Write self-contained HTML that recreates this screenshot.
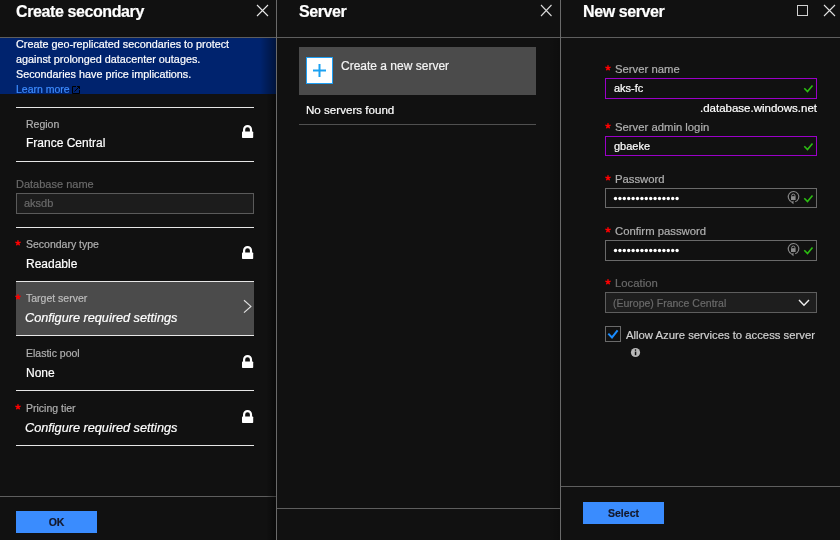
<!DOCTYPE html>
<html><head><meta charset="utf-8">
<style>
*{margin:0;padding:0;box-sizing:border-box}
html,body{width:840px;height:540px;overflow:hidden;background:#111;font-family:"Liberation Sans",sans-serif;color:#fff}
.a{position:absolute;white-space:nowrap}
.tx{line-height:1;will-change:transform;-webkit-text-stroke:0.2px currentColor}
.hl{position:absolute;height:1px}
.vl{position:absolute;width:1px}
.t{font-size:16px;font-weight:bold;letter-spacing:-0.4px}
.lbl{font-size:10.5px;color:#b0b0b0}
.val{font-size:12px;color:#fff}
.it{font-style:italic;font-size:12.7px}
.ast{position:absolute;color:#f00;font-size:15px;line-height:1;font-family:"Liberation Sans",sans-serif}
.ipt{font-size:11px;color:#fff}
.btn{position:absolute;width:81px;height:22px;background:#3a8cfe}
.lock{position:absolute;left:242px}
</style></head><body>
<!-- ===== panel 1 ===== -->
<div class="a tx t" style="left:16px;top:4px">Create secondary</div>
<svg class="a" style="left:256px;top:4px" width="13" height="13" viewBox="0 0 13 13"><path d="M1 1L12 12M12 1L1 12" stroke="#e8e8e8" stroke-width="1.1"/></svg>
<div class="hl" style="left:0;top:37px;width:276px;background:#5e5e5e"></div>
<div class="a" style="left:0;top:38px;width:276px;height:56px;background:#00236e"></div>
<div class="a tx" style="left:16px;top:39px;font-size:10.8px;color:#fff">Create geo-replicated secondaries to protect</div>
<div class="a tx" style="left:16px;top:54px;font-size:10.8px;color:#fff">against prolonged datacenter outages.</div>
<div class="a tx" style="left:16px;top:69px;font-size:10.8px;color:#fff">Secondaries have price implications.</div>
<div class="a tx" style="left:16px;top:84px;font-size:10.5px;color:#3d8cff">Learn more</div>
<svg class="a" style="left:72px;top:86px" width="8" height="8" viewBox="0 0 8 8"><path d="M0.5 0.5H4M0.5 0.5V7.5H7.5V4M2.5 5.5L7.5 0.5M5 0.5H7.5V3" stroke="#000" stroke-width="1" fill="none"/></svg>

<div class="hl" style="left:16px;top:107px;width:238px;background:#e6e6e6"></div>
<div class="a tx lbl" style="left:25.6px;top:119px">Region</div>
<div class="a tx val" style="left:25.6px;top:137px">France Central</div>
<svg class="lock" style="top:125px" width="12" height="14" viewBox="0 0 12 14"><path d="M2.1 7V4.55a3.45 3.45 0 0 1 6.9 0V7" stroke="#fff" stroke-width="2.2" fill="none"/><rect x="0" y="6.6" width="11.2" height="6.4" rx="0.7" fill="#fff"/></svg>

<div class="hl" style="left:16px;top:161px;width:238px;background:#e6e6e6"></div>
<div class="a tx lbl" style="font-size:11px;left:16px;top:179px;color:#6a6a6a">Database name</div>
<div class="a" style="left:16px;top:193px;width:238px;height:21px;border:1px solid #5a5a5a;background:#1c1c1c"></div>
<div class="a tx" style="left:24px;top:198px;font-size:11px;color:#6a6a6a">aksdb</div>

<div class="hl" style="left:16px;top:227px;width:238px;background:#e6e6e6"></div>
<svg class="a" style="left:14.4px;top:238.7px" width="8" height="8" viewBox="0 0 8 8"><path d="M4 4V1.8M4 4L6.09 3.32M4 4L5.29 5.78M4 4L2.71 5.78M4 4L1.91 3.32" stroke="#f00" stroke-width="1.4" stroke-linecap="round"/></svg>
<div class="a tx lbl" style="left:26px;top:239px">Secondary type</div>
<div class="a tx val" style="left:25.6px;top:258px">Readable</div>
<svg class="lock" style="top:246px" width="12" height="14" viewBox="0 0 12 14"><path d="M2.1 7V4.55a3.45 3.45 0 0 1 6.9 0V7" stroke="#fff" stroke-width="2.2" fill="none"/><rect x="0" y="6.6" width="11.2" height="6.4" rx="0.7" fill="#fff"/></svg>

<div class="hl" style="left:16px;top:281px;width:238px;background:#e6e6e6"></div>
<div class="a" style="left:16px;top:282px;width:238px;height:53px;background:#4b4b4b"></div>
<svg class="a" style="left:14.4px;top:292.7px" width="8" height="8" viewBox="0 0 8 8"><path d="M4 4V1.8M4 4L6.09 3.32M4 4L5.29 5.78M4 4L2.71 5.78M4 4L1.91 3.32" stroke="#f00" stroke-width="1.4" stroke-linecap="round"/></svg>
<div class="a tx lbl" style="left:26px;top:293px;color:#bdbdbd">Target server</div>
<div class="a tx val it" style="left:25.4px;top:312px">Configure required settings</div>
<svg class="a" style="left:243px;top:299px" width="9" height="15" viewBox="0 0 9 15"><path d="M1 1.2L7.9 7.4L1 13.6" stroke="#e0e0e0" stroke-width="1.2" fill="none"/></svg>

<div class="hl" style="left:16px;top:335px;width:238px;background:#e6e6e6"></div>
<div class="a tx lbl" style="left:25.6px;top:348px">Elastic pool</div>
<div class="a tx val" style="left:25.6px;top:367px">None</div>
<svg class="lock" style="top:355px" width="12" height="14" viewBox="0 0 12 14"><path d="M2.1 7V4.55a3.45 3.45 0 0 1 6.9 0V7" stroke="#fff" stroke-width="2.2" fill="none"/><rect x="0" y="6.6" width="11.2" height="6.4" rx="0.7" fill="#fff"/></svg>

<div class="hl" style="left:16px;top:390px;width:238px;background:#e6e6e6"></div>
<svg class="a" style="left:14.4px;top:402.7px" width="8" height="8" viewBox="0 0 8 8"><path d="M4 4V1.8M4 4L6.09 3.32M4 4L5.29 5.78M4 4L2.71 5.78M4 4L1.91 3.32" stroke="#f00" stroke-width="1.4" stroke-linecap="round"/></svg>
<div class="a tx lbl" style="left:26px;top:403px">Pricing tier</div>
<div class="a tx val it" style="left:25.4px;top:422px">Configure required settings</div>
<svg class="lock" style="top:410px" width="12" height="14" viewBox="0 0 12 14"><path d="M2.1 7V4.55a3.45 3.45 0 0 1 6.9 0V7" stroke="#fff" stroke-width="2.2" fill="none"/><rect x="0" y="6.6" width="11.2" height="6.4" rx="0.7" fill="#fff"/></svg>

<div class="hl" style="left:16px;top:445px;width:238px;background:#e6e6e6"></div>

<div class="hl" style="left:0;top:496px;width:276px;background:#5e5e5e"></div>
<div class="btn" style="left:16px;top:511px"></div>
<div class="a tx" style="left:16px;top:517px;width:81px;text-align:center;font-size:10.5px;font-weight:bold;color:#14182a">OK</div>

<!-- shadow onto panel 1 -->
<div class="a" style="left:260px;top:38px;width:16px;height:56px;background:linear-gradient(to right,rgba(0,0,0,0),rgba(0,0,0,0.45))"></div>
<div class="a" style="left:266px;top:94px;width:10px;height:446px;background:linear-gradient(to right,rgba(0,0,0,0),rgba(0,0,0,0.45))"></div>
<div class="vl" style="left:276px;top:0;height:540px;background:#6a6a6a"></div>

<!-- ===== panel 2 ===== -->
<div class="a tx t" style="left:299px;top:4px">Server</div>
<svg class="a" style="left:540px;top:4px" width="13" height="13" viewBox="0 0 13 13"><path d="M1 1L11.5 12M11.5 1L1 12" stroke="#d8d8d8" stroke-width="1.1"/></svg>
<div class="hl" style="left:277px;top:37px;width:283px;background:#5e5e5e"></div>
<div class="a" style="left:299px;top:47px;width:237px;height:48px;background:#4b4b4b"></div>
<div class="a" style="left:306px;top:57px;width:27px;height:27px;border:1px solid #1ea0f5;background:#fff"></div>
<svg class="a" style="left:306px;top:57px" width="27" height="27" viewBox="0 0 27 27"><path d="M13.5 7V20M7 13.5H20" stroke="#1ba1f2" stroke-width="2"/></svg>
<div class="a tx" style="left:341px;top:60px;font-size:12px;color:#f4f4f4">Create a new server</div>
<div class="a tx" style="left:306px;top:104px;font-size:11.6px;color:#fff">No servers found</div>
<div class="hl" style="left:299px;top:124px;width:237px;background:#505050"></div>
<div class="a" style="left:548px;top:38px;width:12px;height:502px;background:linear-gradient(to right,rgba(0,0,0,0),rgba(0,0,0,0.2))"></div>
<div class="hl" style="left:277px;top:508px;width:283px;background:#5e5e5e"></div>
<div class="vl" style="left:560px;top:0;height:540px;background:#6a6a6a"></div>

<!-- ===== panel 3 ===== -->
<div class="a tx t" style="left:583px;top:4px">New server</div>
<div class="a" style="left:797px;top:5px;width:11px;height:11px;border:1px solid #d0d0d0"></div>
<svg class="a" style="left:823px;top:4px" width="13" height="13" viewBox="0 0 13 13"><path d="M1 1L12 12M12 1L1 12" stroke="#e0e0e0" stroke-width="1.1"/></svg>
<div class="hl" style="left:561px;top:37px;width:279px;background:#5e5e5e"></div>

<svg class="a" style="left:604.2px;top:63.7px" width="8" height="8" viewBox="0 0 8 8"><path d="M4 4V1.8M4 4L6.09 3.32M4 4L5.29 5.78M4 4L2.71 5.78M4 4L1.91 3.32" stroke="#f00" stroke-width="1.4" stroke-linecap="round"/></svg>
<div class="a tx lbl" style="font-size:11.3px;left:615px;top:64px">Server name</div>
<div class="a" style="left:605px;top:78px;width:212px;height:21px;border:1px solid #9a00c8;background:#111"></div>
<div class="a tx ipt" style="left:614px;top:83px">aks-fc</div>
<svg class="a" style="left:803px;top:84px" width="11" height="9" viewBox="0 0 11 9"><path d="M1.3 4.2L4.5 7.5L9.5 1.5" stroke="#2cbd12" stroke-width="1.6" fill="none"/></svg>
<div class="a tx" style="left:640px;top:103px;width:177px;text-align:right;font-size:11.5px;color:#fff">.database.windows.net</div>

<svg class="a" style="left:604.2px;top:121.7px" width="8" height="8" viewBox="0 0 8 8"><path d="M4 4V1.8M4 4L6.09 3.32M4 4L5.29 5.78M4 4L2.71 5.78M4 4L1.91 3.32" stroke="#f00" stroke-width="1.4" stroke-linecap="round"/></svg>
<div class="a tx lbl" style="font-size:11.3px;left:615px;top:122px">Server admin login</div>
<div class="a" style="left:605px;top:136px;width:212px;height:20px;border:1px solid #9a00c8;background:#111"></div>
<div class="a tx ipt" style="left:614px;top:141px">gbaeke</div>
<svg class="a" style="left:803px;top:142px" width="11" height="9" viewBox="0 0 11 9"><path d="M1.3 4.2L4.5 7.5L9.5 1.5" stroke="#2cbd12" stroke-width="1.6" fill="none"/></svg>

<svg class="a" style="left:604.2px;top:173.7px" width="8" height="8" viewBox="0 0 8 8"><path d="M4 4V1.8M4 4L6.09 3.32M4 4L5.29 5.78M4 4L2.71 5.78M4 4L1.91 3.32" stroke="#f00" stroke-width="1.4" stroke-linecap="round"/></svg>
<div class="a tx lbl" style="font-size:11.3px;left:615px;top:174px">Password</div>
<div class="a" style="left:605px;top:188px;width:212px;height:20px;border:1px solid #6a6a6a;background:#111"></div>
<svg class="a" style="left:612px;top:196px" width="70" height="5" viewBox="0 0 70 5"><g fill="#fff"><circle cx="3.5" cy="2.5" r="1.7"/><circle cx="7.9" cy="2.5" r="1.7"/><circle cx="12.3" cy="2.5" r="1.7"/><circle cx="16.7" cy="2.5" r="1.7"/><circle cx="21.1" cy="2.5" r="1.7"/><circle cx="25.5" cy="2.5" r="1.7"/><circle cx="29.9" cy="2.5" r="1.7"/><circle cx="34.3" cy="2.5" r="1.7"/><circle cx="38.7" cy="2.5" r="1.7"/><circle cx="43.1" cy="2.5" r="1.7"/><circle cx="47.5" cy="2.5" r="1.7"/><circle cx="51.9" cy="2.5" r="1.7"/><circle cx="56.3" cy="2.5" r="1.7"/><circle cx="60.7" cy="2.5" r="1.7"/><circle cx="65.1" cy="2.5" r="1.7"/></g></svg>
<svg class="a" style="left:786px;top:190px" width="15" height="15" viewBox="0 0 15 15"><path d="M5.6 11.7A5.3 5.3 0 1 1 9.2 11.8" stroke="#8a8a8a" stroke-width="1.1" fill="none"/><path d="M7.4 10.6L5.2 12.6L7.6 14.2Z" fill="#8a8a8a"/><path d="M5.6 5.8a1.7 1.7 0 0 1 3.4 0V6.4" stroke="#8a8a8a" stroke-width="1" fill="none"/><rect x="5" y="6.2" width="4.6" height="3.8" fill="#8a8a8a"/></svg>
<svg class="a" style="left:803px;top:194px" width="11" height="9" viewBox="0 0 11 9"><path d="M1.3 4.2L4.5 7.5L9.5 1.5" stroke="#2cbd12" stroke-width="1.6" fill="none"/></svg>

<svg class="a" style="left:604.2px;top:225.7px" width="8" height="8" viewBox="0 0 8 8"><path d="M4 4V1.8M4 4L6.09 3.32M4 4L5.29 5.78M4 4L2.71 5.78M4 4L1.91 3.32" stroke="#f00" stroke-width="1.4" stroke-linecap="round"/></svg>
<div class="a tx lbl" style="font-size:11.3px;left:615px;top:226px">Confirm password</div>
<div class="a" style="left:605px;top:240px;width:212px;height:21px;border:1px solid #6a6a6a;background:#111"></div>
<svg class="a" style="left:612px;top:248px" width="70" height="5" viewBox="0 0 70 5"><g fill="#fff"><circle cx="3.5" cy="2.5" r="1.7"/><circle cx="7.9" cy="2.5" r="1.7"/><circle cx="12.3" cy="2.5" r="1.7"/><circle cx="16.7" cy="2.5" r="1.7"/><circle cx="21.1" cy="2.5" r="1.7"/><circle cx="25.5" cy="2.5" r="1.7"/><circle cx="29.9" cy="2.5" r="1.7"/><circle cx="34.3" cy="2.5" r="1.7"/><circle cx="38.7" cy="2.5" r="1.7"/><circle cx="43.1" cy="2.5" r="1.7"/><circle cx="47.5" cy="2.5" r="1.7"/><circle cx="51.9" cy="2.5" r="1.7"/><circle cx="56.3" cy="2.5" r="1.7"/><circle cx="60.7" cy="2.5" r="1.7"/><circle cx="65.1" cy="2.5" r="1.7"/></g></svg>
<svg class="a" style="left:786px;top:242px" width="15" height="15" viewBox="0 0 15 15"><path d="M5.6 11.7A5.3 5.3 0 1 1 9.2 11.8" stroke="#8a8a8a" stroke-width="1.1" fill="none"/><path d="M7.4 10.6L5.2 12.6L7.6 14.2Z" fill="#8a8a8a"/><path d="M5.6 5.8a1.7 1.7 0 0 1 3.4 0V6.4" stroke="#8a8a8a" stroke-width="1" fill="none"/><rect x="5" y="6.2" width="4.6" height="3.8" fill="#8a8a8a"/></svg>
<svg class="a" style="left:803px;top:246px" width="11" height="9" viewBox="0 0 11 9"><path d="M1.3 4.2L4.5 7.5L9.5 1.5" stroke="#2cbd12" stroke-width="1.6" fill="none"/></svg>

<svg class="a" style="left:604.2px;top:277.7px" width="8" height="8" viewBox="0 0 8 8"><path d="M4 4V1.8M4 4L6.09 3.32M4 4L5.29 5.78M4 4L2.71 5.78M4 4L1.91 3.32" stroke="#f00" stroke-width="1.4" stroke-linecap="round"/></svg>
<div class="a tx lbl" style="font-size:11.3px;left:615px;top:278px;color:#6a6a6a">Location</div>
<div class="a" style="left:605px;top:292px;width:212px;height:21px;border:1px solid #5e5e5e;background:#1e1e1e"></div>
<div class="a tx" style="left:613px;top:298px;font-size:10.5px;color:#6a6a6a">(Europe) France Central</div>
<svg class="a" style="left:798px;top:299px" width="12" height="8" viewBox="0 0 12 8"><path d="M1 1L6 6.3L11 1" stroke="#eee" stroke-width="1.4" fill="none"/></svg>

<div class="a" style="left:605px;top:326px;width:16px;height:16px;border:1px solid #6a6a6a;background:#111"></div>
<svg class="a" style="left:605px;top:326px" width="16" height="16" viewBox="0 0 16 16"><path d="M3.3 7.6L7 11.4L12.6 4.4" stroke="#1a8cff" stroke-width="2" fill="none"/></svg>
<div class="a tx" style="left:626px;top:330px;font-size:11.3px;color:#d0d0d0">Allow Azure services to access server</div>
<svg class="a" style="left:630px;top:347px" width="11" height="11" viewBox="0 0 11 11"><circle cx="5.5" cy="5.5" r="4.6" fill="#b8b8b8"/><rect x="4.8" y="4.6" width="1.5" height="3.6" fill="#111"/><circle cx="5.5" cy="3.1" r="0.8" fill="#111"/></svg>

<div class="hl" style="left:561px;top:486px;width:279px;background:#5e5e5e"></div>
<div class="btn" style="left:583px;top:502px"></div>
<div class="a tx" style="left:583px;top:508px;width:81px;text-align:center;font-size:10.5px;font-weight:bold;color:#14182a">Select</div>
</body></html>
